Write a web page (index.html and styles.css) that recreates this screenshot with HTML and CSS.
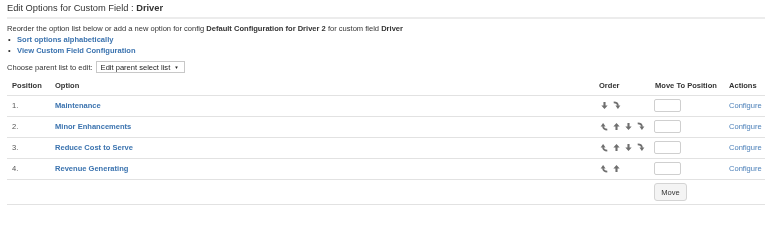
FILE: index.html
```html
<!DOCTYPE html>
<html>
<head>
<meta charset="utf-8">
<link rel="stylesheet" href="styles.css">
</head>
<body>
<div class="page">
  <h2 class="title">Edit Options for Custom Field : <b>Driver</b></h2>
  <p class="intro">Reorder the option list below or add a new option for config <b>Default Configuration for Driver 2</b> for custom field <b>Driver</b></p>
  <ul class="links">
    <li><a href="#">Sort options alphabetically</a></li>
    <li><a href="#">View Custom Field Configuration</a></li>
  </ul>
  <div class="parent">
    <label>Choose parent list to edit:</label>
    <span class="select"><span class="select-text">Edit parent select list</span><span class="caret">▼</span></span>
  </div>
  <table class="options">
    <colgroup>
      <col class="c-pos"><col class="c-opt"><col class="c-ord"><col class="c-move"><col class="c-act">
    </colgroup>
    <thead>
      <tr><th>Position</th><th>Option</th><th>Order</th><th>Move To Position</th><th>Actions</th></tr>
    </thead>
    <tbody>
      <tr>
        <td>1.</td><td><a class="opt" href="#">Maintenance</a></td>
        <td><span class="arrows">
          <svg class="ic" viewBox="0 0 10 10"><path d="M3.5 0h3v5h3L5 10 0.5 5h3z"/></svg>
          <svg class="ic" viewBox="0 0 10 10"><path d="M1 0.5C5 0.5 7 2.5 7 5.5" class="st"/><path d="M3.5 5h7L7 10z"/></svg>
        </span></td>
        <td><input class="pos" type="text"></td><td><a class="cfg" href="#">Configure</a></td>
      </tr>
      <tr>
        <td>2.</td><td><a class="opt" href="#">Minor Enhancements</a></td>
        <td><span class="arrows">
          <svg class="ic" viewBox="0 0 10 10"><path d="M9 9.5C5 9.5 3 7.5 3 4.5" class="st"/><path d="M-0.5 5h7L3 0z"/></svg>
          <svg class="ic" viewBox="0 0 10 10"><path d="M3.5 10h3V5h3L5 0 0.5 5h3z"/></svg>
          <svg class="ic" viewBox="0 0 10 10"><path d="M3.5 0h3v5h3L5 10 0.5 5h3z"/></svg>
          <svg class="ic" viewBox="0 0 10 10"><path d="M1 0.5C5 0.5 7 2.5 7 5.5" class="st"/><path d="M3.5 5h7L7 10z"/></svg>
        </span></td>
        <td><input class="pos" type="text"></td><td><a class="cfg" href="#">Configure</a></td>
      </tr>
      <tr>
        <td>3.</td><td><a class="opt" href="#">Reduce Cost to Serve</a></td>
        <td><span class="arrows">
          <svg class="ic" viewBox="0 0 10 10"><path d="M9 9.5C5 9.5 3 7.5 3 4.5" class="st"/><path d="M-0.5 5h7L3 0z"/></svg>
          <svg class="ic" viewBox="0 0 10 10"><path d="M3.5 10h3V5h3L5 0 0.5 5h3z"/></svg>
          <svg class="ic" viewBox="0 0 10 10"><path d="M3.5 0h3v5h3L5 10 0.5 5h3z"/></svg>
          <svg class="ic" viewBox="0 0 10 10"><path d="M1 0.5C5 0.5 7 2.5 7 5.5" class="st"/><path d="M3.5 5h7L7 10z"/></svg>
        </span></td>
        <td><input class="pos" type="text"></td><td><a class="cfg" href="#">Configure</a></td>
      </tr>
      <tr>
        <td>4.</td><td><a class="opt" href="#">Revenue Generating</a></td>
        <td><span class="arrows">
          <svg class="ic" viewBox="0 0 10 10"><path d="M9 9.5C5 9.5 3 7.5 3 4.5" class="st"/><path d="M-0.5 5h7L3 0z"/></svg>
          <svg class="ic" viewBox="0 0 10 10"><path d="M3.5 10h3V5h3L5 0 0.5 5h3z"/></svg>
        </span></td>
        <td><input class="pos" type="text"></td><td><a class="cfg" href="#">Configure</a></td>
      </tr>
    </tbody>
    <tfoot>
      <tr class="foot">
        <td colspan="3"></td>
        <td><button class="move" type="button">Move</button></td>
        <td></td>
      </tr>
    </tfoot>
  </table>
</div>
</body>
</html>
```

FILE: styles.css
```css
html, body {
  margin: 0;
  padding: 0;
  background: #fff;
  overflow: hidden;
}
body {
  font-family: "Liberation Sans", Arial, sans-serif;
  font-size: 7.55px;
  color: #333;
}
.page {
  padding-left: 7px;
  will-change: transform;
  background: #fff;
}
a {
  color: #3b73af;
  text-decoration: none;
}
.title {
  margin: 0;
  padding-top: 3px;
  padding-bottom: 3px;
  font-size: 9.3px;
  line-height: 11px;
  font-weight: normal;
  color: #333;
  border-bottom: 2px solid #ececec;
}
.intro {
  margin: 5px 0 0;
  line-height: 10px;
}
.links {
  list-style: none;
  margin: 0;
  padding: 0;
}
.links li {
  line-height: 11px;
  display: flex;
}
.links li::before {
  content: "•";
  width: 9px;
  padding-left: 1px;
  color: #333;
}
.links a {
  font-weight: bold;
}
.parent {
  margin-top: 4px;
  height: 14px;
  display: flex;
  align-items: center;
  gap: 3px;
}
.select {
  box-sizing: border-box;
  width: 89px;
  height: 12px;
  border: 1px solid #c8c8c8;
  display: flex;
  align-items: center;
  justify-content: space-between;
  padding: 0 5px 0 4px;
  color: #222;
  background: #fff;
}
.caret {
  font-size: 4.5px;
  color: #222;
}
.options {
  margin-top: 3px;
  width: 760px;
  table-layout: fixed;
  border-collapse: separate;
  border-spacing: 0;
}
.c-pos { width: 43px; }
.c-opt { width: 544px; }
.c-ord { width: 56px; }
.c-move { width: 74px; }
.c-act { width: 43px; }
.options th,
.options td {
  box-sizing: border-box;
  padding: 0 5px;
  text-align: left;
  vertical-align: middle;
  border-bottom: 1px solid #e2e2e2;
  white-space: nowrap;
}
.options th {
  height: 19px;
  font-weight: bold;
  color: #333;
  padding-bottom: 1px;
}
.options td {
  height: 21px;
  color: #555;
  padding-bottom: 2px;
}
.opt {
  font-weight: bold;
}
.cfg {
  color: #4a7fb8;
}
.arrows {
  display: flex;
  gap: 5px;
  align-items: center;
  padding-left: 2px;
}
.ic {
  width: 7px;
  height: 7px;
  fill: #6f6f6f;
  overflow: visible;
}
.ic .st {
  fill: none;
  stroke: #6f6f6f;
  stroke-width: 2.6;
}
.pos {
  box-sizing: border-box;
  width: 27px;
  height: 13px;
  border: 1px solid #cfcfcf;
  border-radius: 2px;
  margin: 0 0 0 -1px;
  padding: 0;
  display: block;
  background: #fff;
}
.foot td {
  height: 25px;
  padding-bottom: 0;
}
.move {
  box-sizing: border-box;
  width: 33px;
  height: 18px;
  margin-left: -1px;
  border: 1px solid #d4d4d4;
  border-radius: 3px;
  background: #f4f4f4;
  font-family: "Liberation Sans", Arial, sans-serif;
  font-size: 7.55px;
  color: #333;
  padding: 0;
}
```
